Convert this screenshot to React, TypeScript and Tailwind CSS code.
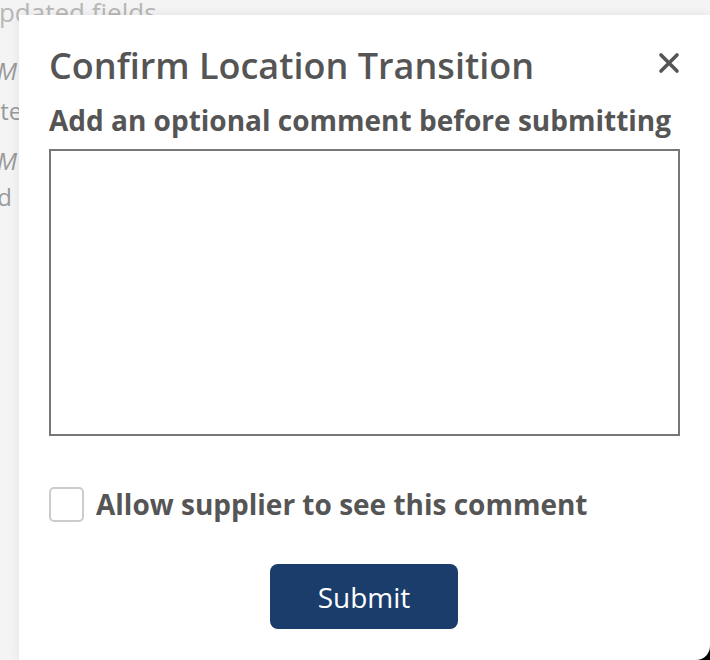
import React from 'react';

const font = { fontFamily: '"Open Sans", "Noto Sans", sans-serif' };

const App: React.FC = () => {
  return (
    <div className="relative w-[710px] h-[660px] overflow-hidden bg-[#f4f4f4]" style={font}>
      {/* page content behind the dialog */}
      <div className="flex flex-col text-[24px] text-[#9a9a9a] leading-[24px]">
        <span className="-ml-[20px] -mt-[1px] text-[26px] leading-[26px] whitespace-nowrap text-[#b8b8b8]">Updated fields</span>
        <div className="w-[16px] flex flex-col items-end">
          <span className="mt-[34px] -mr-[1px] whitespace-nowrap italic">10:42 AM</span>
          <span className="mt-[16px] -mr-[21px] whitespace-nowrap">Updated</span>
          <span className="mt-[26px] -mr-[1px] whitespace-nowrap italic">10:38 AM</span>
          <span className="mt-[12px] mr-[4px] whitespace-nowrap">Created</span>
        </div>
      </div>
      <div className="absolute right-0 bottom-0 w-5 h-5 bg-black" />

      {/* dialog */}
      <div className="absolute left-[19px] top-[15px] w-[691px] h-[645px] bg-white rounded-br-[14px] shadow-[0_0_12px_rgba(0,0,0,0.08)] text-[#555555]">
        <div className="flex flex-col pl-[30px] pr-[29px] pt-[28px]">
          <div className="flex items-start justify-between">
            <h2 className="text-[36px] font-semibold leading-[46px] whitespace-nowrap">Confirm Location Transition</h2>
            <button className="mt-[7px] mr-[-1px] w-[26px] h-[26px] flex items-center justify-center">
              <svg width="22" height="22" viewBox="0 0 22 22" fill="none" stroke="#555555" strokeWidth="3.6" strokeLinecap="round">
                <path d="M3 3L19 19M19 3L3 19" />
              </svg>
            </button>
          </div>
          <p className="mt-[13px] text-[28px] font-bold leading-[36px] whitespace-nowrap">Add an optional comment before submitting</p>
          <textarea className="mt-[11px] w-[631px] h-[287px] border-2 border-[#777777] resize-none outline-none" />
          <label className="mt-[50px] flex items-center gap-[12px]">
            <span className="w-[35px] h-[35px] border-2 border-[#cccccc] rounded-[5px] bg-white" />
            <span className="text-[28px] font-bold leading-[36px] whitespace-nowrap">Allow supplier to see this comment</span>
          </label>
          <div className="mt-[42px] flex justify-center pr-[2px]">
            <button className="w-[188px] h-[65px] rounded-[8px] bg-[#1b3d6b] text-white text-[28px]">Submit</button>
          </div>
        </div>
      </div>
    </div>
  );
};

export default App;
